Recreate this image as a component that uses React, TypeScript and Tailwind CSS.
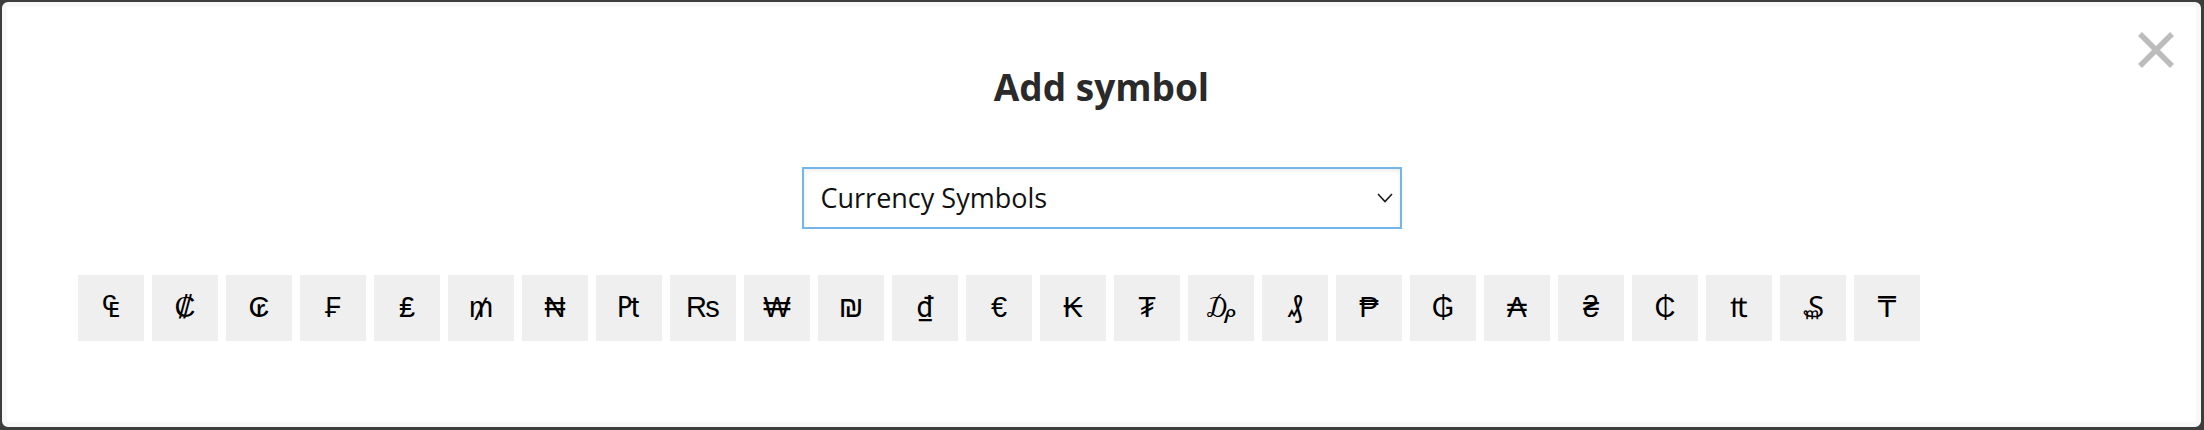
import { useState } from "react";

// peseta and dong look right only in Roboto, the rest follow Liberation Sans
const SYMBOLS: { s: string; cls?: string }[] = [
  { s: "₠" }, { s: "₡" }, { s: "₢" }, { s: "₣" }, { s: "₤" }, { s: "₥" },
  { s: "₦" }, { s: "₧", cls: "font-['Roboto',sans-serif]" }, { s: "₨" },
  { s: "₩" }, { s: "₪" }, { s: "₫", cls: "font-['Roboto',sans-serif]" },
  { s: "€" }, { s: "₭" }, { s: "₮" }, { s: "₯" }, { s: "₰" }, { s: "₱" },
  { s: "₲" }, { s: "₳" }, { s: "₴" }, { s: "₵" }, { s: "₶" }, { s: "₷" }, { s: "₸" },
];

export default function App() {
  const [group, setGroup] = useState("currency");

  return (
    <div className="h-[430px] w-[2204px] bg-[#3d3d3d] pt-[2px] pr-[3px] pb-[3px] pl-[2px]">
      <div className="relative flex h-full flex-col rounded-[6px] border-[5px] border-[#f8f8f8] bg-white font-['Open_Sans','Noto_Sans',sans-serif]">
        {/* Close */}
        <button className="absolute right-[20px] top-[23px] h-[40px] w-[40px]" aria-label="Close">
          <svg viewBox="0 0 40 40" className="h-full w-full">
            <path d="M4 4 L36 36 M36 4 L4 36" stroke="#bcbcbc" strokeWidth="5.5" />
          </svg>
        </button>

        <h1 className="mt-[54px] h-[52px] text-center text-[37px] font-bold leading-[52px] text-[#2a2a2a]">
          Add symbol
        </h1>

        {/* Category select */}
        <div className="relative mx-auto mt-[54px] h-[62px] w-[600px]">
          <select
            value={group}
            onChange={(e) => setGroup(e.target.value)}
            className="h-full w-full appearance-none rounded-none border-2 border-[#74b5ea] bg-white pl-[17px] text-[27px] text-[#111] shadow-[inset_0_2px_4px_rgba(0,0,0,0.07)] outline-none"
          >
            <option value="currency">Currency Symbols</option>
            <option value="math">Math Symbols</option>
            <option value="arrows">Arrows</option>
          </select>
          <svg
            viewBox="0 0 16 10"
            className="pointer-events-none absolute right-[9px] top-[26px] h-[10px] w-[16px]"
          >
            <path d="M1 1 L8 8.5 L15 1" fill="none" stroke="#1a1a1a" strokeWidth="1.6" />
          </svg>
        </div>

        {/* Symbols */}
        <div className="mt-[46px] flex gap-2 pl-[71px] font-['Liberation_Sans','DejaVu_Sans',sans-serif]">
          {SYMBOLS.map(({ s, cls }) => (
            <button
              key={s}
              className={`flex h-[66px] w-[66px] items-center justify-center bg-[#efefef] text-[29px] text-black ${cls ?? ""}`}
            >
              {s}
            </button>
          ))}
        </div>
      </div>
    </div>
  );
}
